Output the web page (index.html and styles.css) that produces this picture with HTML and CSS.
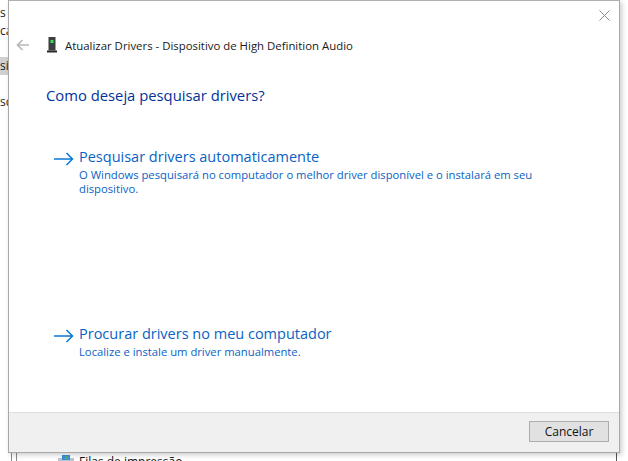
FILE: index.html
```html
<!DOCTYPE html>
<html lang="pt">
<head>
<meta charset="utf-8">
<title>Atualizar Drivers</title>
<link rel="stylesheet" href="styles.css">
</head>
<body>
<div class="backdrop">
  <div class="bg-top-mark"></div>
  <span class="bg-frag f1">s</span>
  <span class="bg-frag f2">ca</span>
  <span class="bg-frag f3">si</span>
  <span class="bg-frag f4">sc</span>
  <div class="bg-line l1"></div>
  <div class="bg-line l2"></div>
  <div class="bg-line l3"></div>
  <div class="bg-printer">
    <svg width="16" height="12" viewBox="0 0 16 12"><rect x="0" y="3" width="16" height="9" fill="#b9c6d2"/><rect x="4" y="0" width="8" height="5" fill="#3c8ed8"/><rect x="7" y="1" width="3" height="3" fill="#4ab56a"/></svg>
    <span>Filas de impressão</span>
  </div>
</div>
<main class="dialog">
  <svg class="close" width="11" height="11" viewBox="0 0 11 11"><path d="M.5.5l10 10M10.500.5l-10 10" stroke="#8a8a8a" stroke-width="1" fill="none"/></svg>
  <header class="head">
    <svg class="back" width="13" height="12" viewBox="0 0 13 12"><path d="M13 6H1.500M6.500 1l-5 5 5 5" stroke="#b8b8b8" stroke-width="1.700" fill="none"/></svg>
    <svg class="device" width="10" height="16" viewBox="0 0 10 16"><rect x="1.500" y="0" width="7" height="13.500" fill="#3b3f42"/><rect x="0" y="13.500" width="10" height="2" fill="#26292b"/><rect x="3.500" y="3" width="3" height="3" fill="#38e05a"/></svg>
    <span class="head-title">Atualizar Drivers - Dispositivo de High Definition Audio</span>
  </header>
  <h1 class="question">Como deseja pesquisar drivers?</h1>
  <div class="options">
    <a class="option">
      <svg class="arrow" width="20" height="14" viewBox="0 0 20 14"><path d="M0 7h18.500M12.500 1l6 6-6 6" stroke="#0a78d7" stroke-width="1.500" fill="none"/></svg>
      <div class="option-text">
        <div class="option-title">Pesquisar drivers automaticamente</div>
        <div class="option-desc">O Windows pesquisará no computador o melhor driver disponível e o instalará em seu dispositivo.</div>
      </div>
    </a>
    <a class="option">
      <svg class="arrow" width="20" height="14" viewBox="0 0 20 14"><path d="M0 7h18.500M12.500 1l6 6-6 6" stroke="#0a78d7" stroke-width="1.500" fill="none"/></svg>
      <div class="option-text">
        <div class="option-title">Procurar drivers no meu computador</div>
        <div class="option-desc">Localize e instale um driver manualmente.</div>
      </div>
    </a>
  </div>
  <footer class="foot">
    <button class="cancel">Cancelar</button>
  </footer>
</main>
</body>
</html>
```
FILE: styles.css
```css
html, body {
  margin: 0;
  height: 100%;
  overflow: hidden;
  background: #fff;
  font-family: "Open Sans", "Noto Sans", sans-serif;
}
.backdrop {
  position: absolute;
  inset: 0;
  overflow: hidden;
}
.bg-top-mark {
  position: absolute;
  left: 62px;
  top: 0;
  width: 10px;
  height: 1px;
  background: #1e6fb8;
}
.bg-frag {
  position: absolute;
  left: 0;
  font-size: 12px;
  line-height: 18px;
  color: #222;
}
.f1 { top: 4px; }
.f2 { top: 22px; }
.f3 { top: 57px; background: #d0d0d0; width: 8px; }
.f4 { top: 93px; }
.bg-line {
  position: absolute;
  background: #8c8c8c;
}
.l1 { left: 11px; top: 453px; width: 1px; height: 8px; }
.l2 { left: 16px; top: 453px; width: 1px; height: 8px; }
.l3 { left: 616px; top: 453px; width: 1px; height: 8px; background: #555; }
.bg-printer {
  position: absolute;
  left: 58px;
  top: 455px;
  display: flex;
  gap: 5px;
  font-size: 12px;
  line-height: 14px;
  color: #111;
}
.dialog {
  position: absolute;
  left: 8px;
  top: 0;
  width: 612px;
  height: 453px;
  box-sizing: border-box;
  background: #fff;
  border-right: 1px solid #a8a8a8;
  border-left: 1px solid #a8a8a8;
  border-bottom: 1px solid #a8a8a8;
  border-top: 1px solid #b0b0b0;
  box-shadow: 2px 2px 5px rgba(0, 0, 0, .2);
  display: flex;
  flex-direction: column;
}
.close {
  position: absolute;
  right: 9px;
  top: 9px;
}
.head {
  display: flex;
  align-items: center;
  height: 16px;
  margin: 36px 0 0 7px;
}
.device { margin-left: 18px; }
.head-title {
  margin-left: 8px;
  font-size: 11.4px;
  color: #1a1a1a;
  white-space: nowrap;
}
.question {
  margin: 31px 0 0 37px;
  font-size: 14.8px;
  line-height: 22px;
  font-weight: 400;
  color: #003399;
}
.options {
  flex: 1;
  display: flex;
  flex-direction: column;
  padding: 0 0 0 45px;
}
.option {
  display: flex;
  align-items: flex-start;
  color: #0066cc;
}
.option:nth-child(1) { margin-top: 40px; }
.option:nth-child(2) { margin-top: 127px; }
.arrow { margin-top: 6px; }
.option-text {
  margin-left: 5px;
  width: 470px;
}
.option-title {
  font-size: 14.5px;
  line-height: 22px;
  color: #0a62c4;
  white-space: nowrap;
}
.option-desc {
  font-size: 11.25px;
  line-height: 14px;
  color: #0a62c4;
}
.foot {
  box-sizing: border-box;
  height: 40px;
  background: #f0f0f0;
  border-top: 1px solid #dfdfdf;
  display: flex;
  justify-content: flex-end;
  align-items: flex-start;
  padding: 8px 10px 0 0;
}
.cancel {
  width: 80px;
  height: 21px;
  padding: 0;
  font: 12px "Open Sans", sans-serif;
  color: #111;
  background: #e1e1e1;
  border: 1px solid #adadad;
}
```
